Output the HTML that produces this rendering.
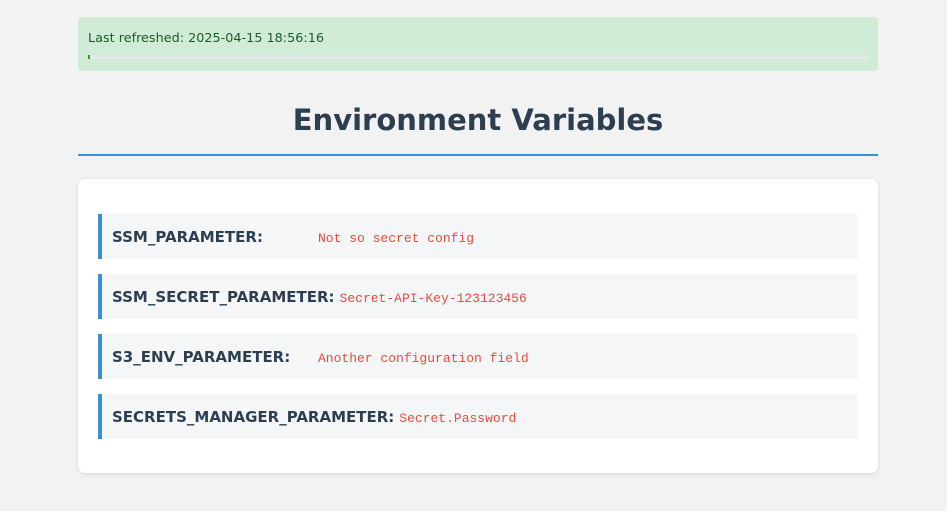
<!DOCTYPE html>
<html><head><style>
body{margin:0;background:#f2f2f2;font-family:"DejaVu Sans",Verdana,sans-serif;}
.wrap{width:800px;margin-left:78px;padding-top:17px;}
.refresh{background:#d0ebd6;border-radius:4px;height:54px;box-sizing:border-box;padding:14px 10px 0;color:#1d5a2a;font-size:12.8px;}
.bar{margin-top:9px;height:4px;background:#e4e8ec;border-radius:2px;position:relative;}
.bar i{position:absolute;left:0;top:0;width:2px;height:4px;background:#2a9d3a;}
h1{margin:0;text-align:center;color:#2c3e50;font-size:29px;font-weight:bold;padding-top:29px;height:54px;border-bottom:2px solid #3a8fd6;line-height:40px;box-sizing:content-box;}
.card{margin-top:23px;background:#fff;border-radius:7px;box-shadow:0 1px 4px rgba(0,0,0,.12);padding:35px 20px 34px;}
.item{background:#f5f6f8;border-left:4px solid #3a8fd6;height:45px;display:flex;align-items:center;padding-left:10px;margin-bottom:15px;box-sizing:border-box;}
.item:last-child{margin-bottom:0}
.k{font-weight:bold;color:#2c3e50;font-size:15px;min-width:201px;}
.v{font-family:"Liberation Mono",monospace;color:#e74c3c;font-size:13px;margin-left:5px;padding-top:3px;}
</style></head><body><div class="wrap">
<div class="refresh">Last refreshed: 2025-04-15 18:56:16<div class="bar"><i></i></div></div>
<h1>Environment Variables</h1>
<div class="card">
<div class="item"><span class="k">SSM_PARAMETER:</span><span class="v">Not so secret config</span></div>
<div class="item"><span class="k" style="min-width:0">SSM_SECRET_PARAMETER:</span><span class="v">Secret-API-Key-123123456</span></div>
<div class="item"><span class="k">S3_ENV_PARAMETER:</span><span class="v">Another configuration field</span></div>
<div class="item"><span class="k" style="min-width:0">SECRETS_MANAGER_PARAMETER:</span><span class="v">Secret.Password</span></div>
</div></div></body></html>
